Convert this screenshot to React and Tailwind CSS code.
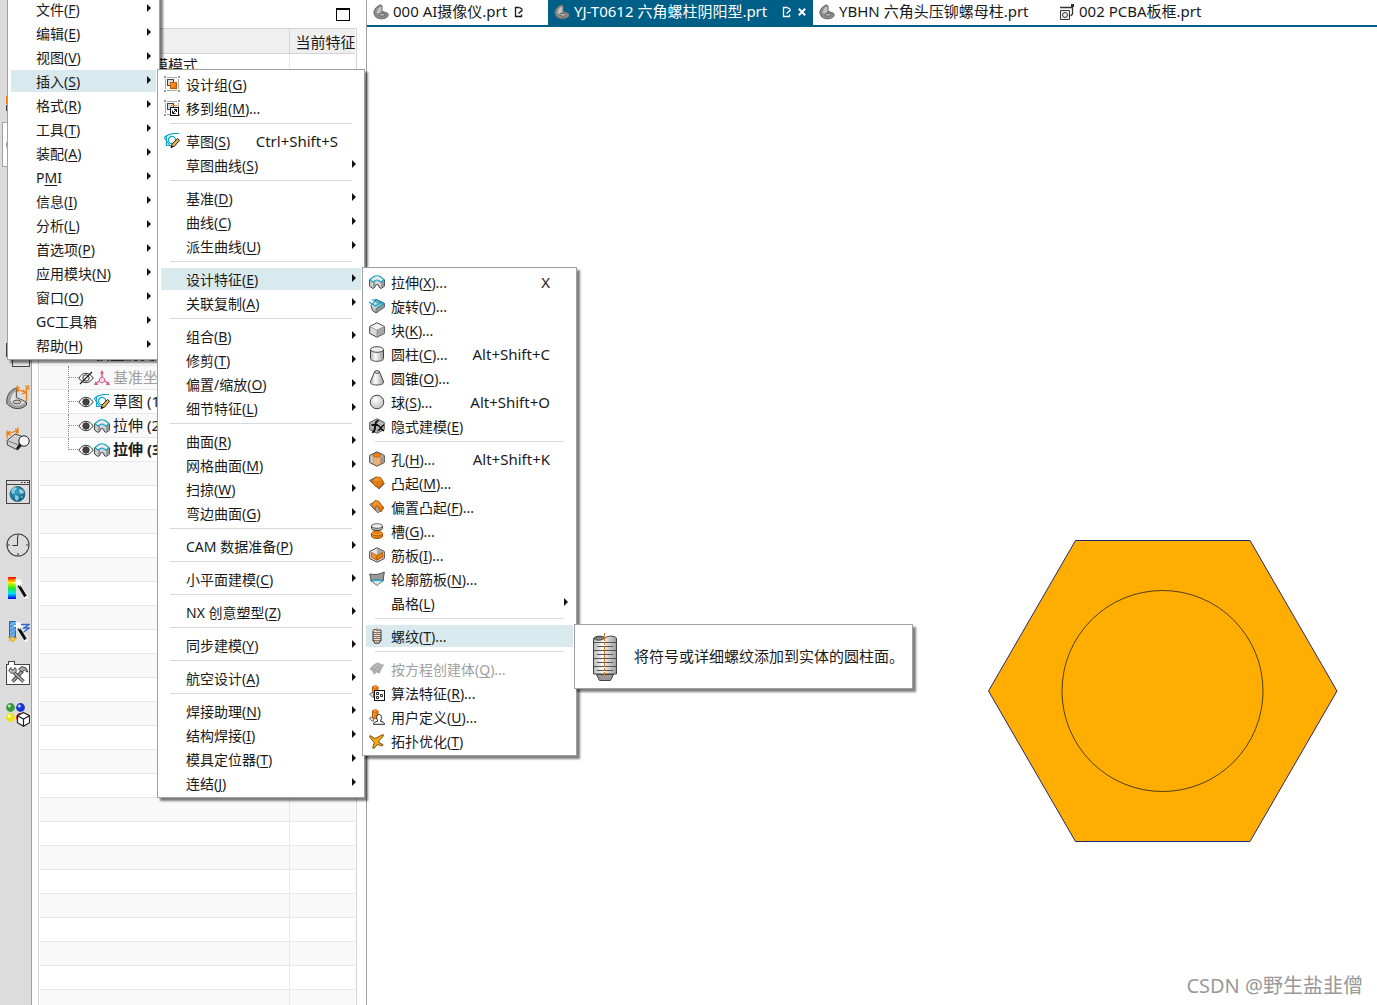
// App.jsx
import { Fragment } from 'react';

const EDGE = '#444';

const Svg = ({ size = 16, children, className = '' }) => (
  <svg
    width={size}
    height={size}
    viewBox={`0 0 ${size} ${size}`}
    fill="none"
    className={`block shrink-0 ${className}`}
    aria-hidden="true"
  >
    {children}
  </svg>
);

/* ---------- shared gradients ---------- */

const Gradients = () => (
  <svg width="0" height="0" className="absolute" aria-hidden="true">
    <defs>
      <linearGradient id="metal" x1="0" y1="0" x2="1" y2="1">
        <stop offset="0" stopColor="#fafafa" />
        <stop offset="1" stopColor="#8e8e8e" />
      </linearGradient>
      <linearGradient id="metalSide" x1="0" y1="0" x2="1" y2="0">
        <stop offset="0" stopColor="#b5b5b5" />
        <stop offset="0.4" stopColor="#fcfcfc" />
        <stop offset="1" stopColor="#9a9a9a" />
      </linearGradient>
      <linearGradient id="amber" x1="0" y1="0" x2="1" y2="1">
        <stop offset="0" stopColor="#ffa73d" />
        <stop offset="1" stopColor="#d96a00" />
      </linearGradient>
      <linearGradient id="rainbow" x1="0" y1="0" x2="0" y2="1">
        <stop offset="0" stopColor="#f00" />
        <stop offset="0.25" stopColor="#fe0" />
        <stop offset="0.5" stopColor="#2e2" />
        <stop offset="0.75" stopColor="#0df" />
        <stop offset="1" stopColor="#00f" />
      </linearGradient>
      <radialGradient id="ball" cx="0.4" cy="0.35" r="0.7">
        <stop offset="0" stopColor="#fff" />
        <stop offset="1" stopColor="#bdbdbd" />
      </radialGradient>
      <radialGradient id="globe" cx="0.4" cy="0.35" r="0.7">
        <stop offset="0" stopColor="#3aa6c4" />
        <stop offset="1" stopColor="#0a5f85" />
      </radialGradient>
    </defs>
  </svg>
);

/* ---------- 16px menu icons ---------- */

const GroupFrame = () => (
  <>
    <path d="M1.500 3v10M14.500 3v10M3 1.500h10M3 14.500h10" stroke="#aaa" />
    <path d="M0 0h2v2H0zM14 0h2v2h-2zM0 14h2v2H0zM14 14h2v2h-2z" fill="#999" />
  </>
);

const DesignGroupIcon = () => (
  <Svg>
    <GroupFrame />
    <rect x="3.500" y="3.500" width="6" height="6" fill="#ddd" stroke="#444" />
    <rect x="6.500" y="6.500" width="6" height="6" fill="url(#amber)" stroke="#c25a00" />
  </Svg>
);

const MoveGroupIcon = () => (
  <Svg>
    <GroupFrame />
    <rect x="3.500" y="3.500" width="6" height="6" fill="#ddd" stroke="#444" />
    <path d="M7 5.500h6" stroke="#f08010" />
    <rect x="6.500" y="7.500" width="8" height="8" fill="#fff" stroke="#111" />
    <path d="M9 13l3.500-3.500M10 9.500h2.500V12M8.500 10.500v3h3" stroke="#111" />
  </Svg>
);

const SketchIcon = () => (
  <Svg>
    <path d="M0 4.500C4 1 9 0 15 .5M2.500 2v10.500h5M.5 5l5 7" stroke="#11a5c7" strokeWidth="1.200" />
    <circle cx="8" cy="7" r="3.600" stroke="#11a5c7" strokeWidth="1.200" />
    <path d="M7 14.500l1-3.300 5.500-5.700 2 1.700-5 6z" fill="#eab543" stroke="#222" />
    <path d="M7 14.800l.8-2.600 1.700 1.500z" fill="#111" />
  </Svg>
);

const ExtrudeIcon = () => (
  <Svg>
    <path d="M.6 6v6.200L4 14.500l2-1.300v-1.700l2-1 2 1v1.700l2 1.300 3.400-2.300V6L11.500 3h-7z" fill="#d2d2d2" stroke={EDGE} />
    <path d="M12 8.500l3-2v5.500l-3 2zM4 8.500l2-1.300v5.500L4 14z" fill="#999" />
    <path d="M.8 5.800L4.200 3C6.500 1.500 9.500 1.500 11.800 3l3.400 2.800L12 8 10 6.800C9 6 7 6 6 6.800L4 8z" fill="#ececec" stroke="#11a5c7" strokeWidth="1.200" />
  </Svg>
);

const RevolveIcon = () => (
  <Svg>
    <path d="M2 7.500l1.500 5L7 15l8.500-6V5.500L7.500 1.500z" fill="url(#metal)" stroke={EDGE} />
    <path d="M7 15v-4l8.500-5.500V9z" fill="#999" stroke="#666" strokeWidth=".6" />
    <path d="M0 4l6.500 4L13 4M3 1.500l8 4.500M5.500 1L14.500 6 7.500 10.500" stroke="#11a5c7" strokeWidth="1.200" />
  </Svg>
);

const BlockIcon = () => (
  <Svg>
    <path d="M8 .8l7.300 3.700v7L8 15.200.7 11.500v-7z" fill="#d9d9d9" stroke={EDGE} />
    <path d="M8 1.400l6.700 3.300L8 8.200 1.300 4.700z" fill="#f2f2f2" />
    <path d="M8 8.200l6.800-3.500v6.500L8 14.600z" fill="#a8a8a8" />
    <path d="M.9 4.700L8 8.200l7.100-3.500M8 8.200v6.600" stroke="#888" strokeWidth=".7" />
  </Svg>
);

const CylinderIcon = () => (
  <Svg>
    <path d="M1.500 3.500v9c0 1.700 3 2.800 6.500 2.800s6.500-1.100 6.500-2.800v-9" fill="url(#metalSide)" stroke={EDGE} />
    <ellipse cx="8" cy="3.500" rx="6.500" ry="2.800" fill="#eee" stroke={EDGE} />
  </Svg>
);

const ConeIcon = () => (
  <Svg>
    <path d="M5.500 2L1.300 12c0 2 3 3 6.700 3s6.700-1 6.700-3L10.500 2" fill="url(#metalSide)" stroke={EDGE} />
    <ellipse cx="8" cy="2" rx="2.500" ry="1.300" fill="#eee" stroke={EDGE} />
  </Svg>
);

const SphereIcon = () => (
  <Svg>
    <circle cx="8" cy="8" r="6.800" fill="url(#ball)" stroke={EDGE} />
  </Svg>
);

const ImplicitIcon = () => (
  <Svg>
    <path d="M8 .8l7.300 3.700v7L8 15.200.7 11.500v-7z" fill="#b5b5b5" stroke="#555" />
    <path d="M3 14c2 .5 2.500-1 3-4.500S6.500 2.500 9.500 3M2.500 7H9" stroke="#111" strokeWidth="2" />
    <path d="M9 7.500c2-.5 3 6 6 5M15 7c-2 0-4 6-6.500 5.500" stroke="#111" strokeWidth="1.600" />
  </Svg>
);

const HoleIcon = () => (
  <Svg>
    <path d="M8 .8l7.300 3.700v7L8 15.200.7 11.500v-7z" fill="#ccc" stroke={EDGE} />
    <path d="M8 8l6.900-3.200v6.400L8 14.700z" fill="#9a9a9a" />
    <path d="M4.300 4v8.700L8 14.500l3.700-1.800V4z" fill="#e8b47c" stroke="#c77a33" strokeWidth=".6" />
    <ellipse cx="8" cy="4.300" rx="3.900" ry="1.900" fill="#f28414" stroke="#b85a00" strokeWidth=".8" />
  </Svg>
);

const EmbossIcon = () => (
  <Svg>
    <path d="M.5 5.500L10 14l5.500-5.500L7 2z" fill="#888" stroke="#666" />
    <path d="M3 6l4-4 4.500.5 3 4.500-3.500 5.500-5-1.500z" fill="url(#amber)" stroke="#b85a00" />
    <path d="M3.500 6.500l5.500.5 5-.2M9 7l-2 4" stroke="#c86400" strokeWidth=".7" />
  </Svg>
);

const OffsetEmbossIcon = () => (
  <Svg>
    <path d="M.5 5.500L9 14l6-5.500L7 2z" fill="#a5a5a5" stroke="#777" />
    <path d="M3 5.500l3-4 4 1 4.500 6.500-2.500 4-3-5.500-2-.5-1 4z" fill="url(#amber)" stroke="#b85a00" />
  </Svg>
);

const GrooveIcon = () => (
  <Svg>
    <path d="M2.500 10v3c0 1.300 2.500 2.400 5.500 2.400s5.500-1.100 5.500-2.400v-3" fill="url(#amber)" stroke="#9c4d00" />
    <ellipse cx="8" cy="10.500" rx="5.500" ry="2.300" fill="#ff9b2f" stroke="#9c4d00" strokeWidth=".8" />
    <path d="M4.500 6.500h7V10c-1.500 1-5.500 1-7 0z" fill="#e07a10" />
    <path d="M2.500 3v2.500c0 1.200 2.500 2 5.500 2s5.500-.8 5.500-2V3" fill="#bbb" stroke={EDGE} />
    <ellipse cx="8" cy="3" rx="5.500" ry="2.300" fill="#eee" stroke={EDGE} strokeWidth=".8" />
  </Svg>
);

const RibIcon = () => (
  <Svg>
    <path d="M8 .8l7.300 3.700v7L8 15.200.7 11.500v-7z" fill="#e6e6e6" stroke={EDGE} />
    <path d="M8 1.300v6L14.700 11V4.700z" fill="#aaa" />
    <path d="M2.500 5.500L8 8.500l5.500-3v4.800L8 13.300l-5.500-3z" fill="url(#amber)" stroke="#a85200" strokeWidth=".8" />
    <path d="M8 8.500v4.800" stroke="#a85200" />
  </Svg>
);

const ContourRibIcon = () => (
  <Svg>
    <path d="M1 9l7 5.500L15 9z" fill="#e4e4e4" stroke="#777" />
    <path d="M.7 3c5 1 10 .5 14.600-2L14 10c-4-1.500-8-1.500-11.500 0z" fill="#999" stroke="#555" />
    <path d="M2.500 10.500c3.500-1.500 8-1.500 11.500 0" stroke="#22b5d8" strokeWidth="1.500" />
  </Svg>
);

const ThreadIcon = () => (
  <Svg>
    <path d="M4 2.500c1-1.500 2.500-1 4-.3s3-1.200 4 0V13h-1l-.7 2.200H5.700L5 13H4z" fill="#e4e4e4" stroke="#333" />
    <path d="M4 4.500h8M4 6.500h8M4 8.500h8M4 10.500h8M4 12.500h8" stroke="#555" strokeWidth=".8" />
    <path d="M8 0v16" stroke="#f07a10" strokeWidth="1.200" strokeDasharray="3 1" />
  </Svg>
);

const LawSurfaceIcon = () => (
  <Svg>
    <path d="M.5 8C3 5 6 2 9 1.500c2 1 4 2 6.500 2.200C13 6 12 9 10.500 13 8 11 7.500 11 5 14 4 11 2.500 9 .5 8z" fill="#a9a9a9" />
    <path d="M3 5.500c3 1 5 2 8 4M6 3c2.500 1 5 2 7 3.500M3 10c2-3 5-6 8-7.800M6.500 11C8 8 10 5 13.500 3" stroke="#c4c4c4" strokeWidth=".7" />
  </Svg>
);

const AlgorithmIcon = () => (
  <Svg>
    <path d="M.5 9l4-2v6z" fill="#ddd" stroke="#777" />
    <path d="M3.500 2v5c1 1 4.500 1 5.500 0V2z" fill="url(#amber)" stroke="#b85a00" />
    <ellipse cx="6.200" cy="2" rx="2.800" ry="1.300" fill="#ff9b2f" stroke="#b85a00" strokeWidth=".7" />
    <rect x="5.500" y="5.500" width="10" height="10" fill="#fff" stroke="#111" />
    <path d="M7.500 7.500h2v2h-2zM7.500 11.500h2v2h-2zM11.500 9.500h2v2h-2z" stroke="#111" strokeWidth=".9" />
  </Svg>
);

const UserDefinedIcon = () => (
  <Svg>
    <path d="M.5 9l4-2v5.500L1.500 11z" fill="#ddd" stroke="#777" />
    <path d="M3.500 2v7c1 1 4.500 1 5.500 0V2z" fill="url(#amber)" stroke="#b85a00" />
    <ellipse cx="6.200" cy="2" rx="2.800" ry="1.300" fill="#ff9b2f" stroke="#b85a00" strokeWidth=".7" />
    <path d="M4.500 15.300c0-2 2-2.500 4-3V11C7 9 7.500 5.500 10 5.500s3.200 3.500 1.700 5.500v1.300c2 .5 3.800 1 3.800 3z" fill="#fff" stroke="#222" />
  </Svg>
);

const TopologyIcon = () => (
  <Svg>
    <path d="M1 2.500l5 3L14 1.500l.5 1.700-4.500 4.300.3 2.500 3.700 1.500-.8 1.500-5-1.500-3 4-1.500-.5 1.500-5.500L.7 4z" fill="#f2a81d" stroke="#6b4a08" strokeWidth=".9" />
  </Svg>
);

/* ---------- part tab icons ---------- */

const PartIcon = () => (
  <Svg>
    <path d="M.8 9C1 5.500 3.500 2 8 .8l1 1v5.400l5.500 2c1.200 1.300.8 3.300-1 4.300-3.500 2-8 1.700-11-.8z" fill="#8b8b8b" stroke="#666" />
    <path d="M3.500 8.500C4 5.500 6 3 8.300 2.200v5.600L5 10z" fill="#c4c4c4" />
    <ellipse cx="9" cy="10.700" rx="3" ry="1.500" fill="#b9b9b9" stroke="#555" strokeWidth=".8" />
  </Svg>
);

const BoardIcon = () => (
  <Svg>
    <path d="M1.500 6.500h9v9h-9z" fill="#eee" stroke="#333" />
    <path d="M1 3.500h12M13.500 2v8l-2 2" stroke="#333" strokeWidth="1.300" />
    <circle cx="6" cy="11" r="2.500" stroke="#333" />
    <rect x="12" y="0" width="3" height="3" fill="#333" />
  </Svg>
);

const ModifiedIcon = () => (
  <svg width="10" height="12" viewBox="0 0 10 12" fill="none" className="block shrink-0" aria-hidden="true">
    <path d="M5.500 1.500h-4v9h6V8.500" stroke="currentColor" strokeWidth="1.300" />
    <path d="M4.500 7.500L8.500 4M5.500 1.500L8.500 3.500" stroke="currentColor" strokeWidth="1.500" />
  </svg>
);

/* ---------- tree icons ---------- */

const EyeIcon = ({ off }) => (
  <Svg>
    <path d="M.8 8C3 4.800 5.500 3.300 8 3.300S13 4.800 15.200 8C13 11.200 10.500 12.700 8 12.700S3 11.200.8 8z" fill="#fff" stroke="#333" />
    <circle cx="8" cy="8" r="3.200" fill={off ? '#fff' : '#444'} stroke="#333" />
    {off && <path d="M2 14L14 2" stroke="#222" strokeWidth="1.300" />}
  </Svg>
);

const CsysIcon = () => (
  <Svg>
    <path d="M8 2v7L2 13.500M8 9l6 4.500" stroke="#d65c8b" strokeWidth="1.500" />
    <path d="M8 0l2 3.500H6zM0 15l1.500-3.700L4.300 15zM16 15l-1.500-3.700L11.700 15z" fill="#d65c8b" />
    <path d="M8 7l2.500 1.500v3L8 13l-2.500-1.500v-3z" fill="#f6dbe6" stroke="#d65c8b" />
  </Svg>
);

/* ---------- 24px resource bar icons ---------- */

const NavigatorIcon = () => (
  <Svg size={24}>
    <rect y="7" width="16" height="8" fill="#f08010" />
    <rect y="16" width="16" height="6" fill={EDGE} />
    <path d="M4 18.500h12M4 20.500h12" stroke="#ccc" />
  </Svg>
);

const ConstraintIcon = () => (
  <Svg size={24}>
    <rect x=".5" y=".5" width="16" height="13" fill="#eee" stroke={EDGE} />
    <rect x="6.500" y="6.500" width="17" height="17" fill="#e4e4e4" stroke={EDGE} />
  </Svg>
);

const BracketDimIcon = () => (
  <Svg size={24}>
    <path d="M.8 16C1 10 4 5 10.500 3v9.500l10 4.500v3c-3 3-7 4-11 3.500-3.500-.5-7-3-8.700-5z" fill="#a5a5a5" stroke={EDGE} />
    <path d="M4 15.500C4.500 10.500 7 7 10 5.500v7.200l9.500 4.300c-2 3-6 4.500-10 4C7 20.500 5 18 4 15.500z" fill="#e2e2e2" stroke="#888" strokeWidth=".7" />
    <ellipse cx="11" cy="17" rx="4" ry="1.900" fill="#c9c9c9" stroke="#555" />
    <path d="M11 .5v5M11 4l8.500 3.500M20.500 4v12M13.500 2L11 4l1.500 3M17 5l2.500 2.500L16 9M19.500.5l4 4M23.500.5l-4 4" stroke="#ee7d0e" strokeWidth="1.300" />
  </Svg>
);

const InspectIcon = () => (
  <Svg size={24}>
    <path d="M1 13.500L9 7l10 3.500v5L11.500 23 1.500 18z" fill="#d0d0d0" stroke={EDGE} />
    <path d="M11.500 17.500l7.500-7v5L11.500 23z" fill="#999" />
    <path d="M1 13.500l10.500 4 7.500-7" stroke="#777" />
    <path d="M1 3.500v8M12 .5v6M1.500 7L11.500 3.500M4 4L1.500 7 5 8.500M9 2l2.500 1.500L10 6.500" stroke="#ee7d0e" strokeWidth="1.300" />
    <circle cx="18" cy="14" r="5.200" fill="#f8f8f8" stroke="#222" />
    <path d="M14.500 17.500L11 22" stroke="#111" strokeWidth="2.500" />
  </Svg>
);

const BrowserIcon = () => (
  <Svg size={24}>
    <rect x=".5" y=".5" width="23" height="23" fill="#dcdcdc" stroke={EDGE} />
    <path d="M0 4.500h24" stroke={EDGE} />
    <path d="M15 2.500h1.500M18 2.500h1.500M21 2.500h1.500" stroke="#222" />
    <circle cx="11.500" cy="14" r="7.500" fill="url(#globe)" stroke="#1b5c77" strokeWidth=".8" />
    <path d="M6 9c2-2 4-2 5-1l-1 2-2 1 1 2-2 1-2-2zM13 9l4 1 1 3-3 1-2-2zM9 15l3 1 1 2-2 3-2-2zM15 16l2 .5-1.500 2z" fill="#8fcbdc" />
  </Svg>
);

const HistoryIcon = () => (
  <Svg size={24}>
    <circle cx="12" cy="12" r="11" stroke={EDGE} strokeWidth="1.100" />
    <path d="M12 1v3M12 20v3M1 12h3M20 12h3" stroke={EDGE} strokeWidth="1.100" />
    <path d="M11.500 4v8.500H6.500" stroke="#333" />
  </Svg>
);

const Wand = () => (
  <>
    <path d="M13 9l7.500 12.500" stroke="#fff" strokeWidth="5" strokeOpacity=".5" />
    <path d="M12.500 9l7 11.500" stroke="#111" strokeWidth="3" />
    <circle cx="20.500" cy="21.500" r="1.200" fill="#fff" />
    <path d="M12 1l1 3.500 3.500-1.500-2 3 3 1.500-3.500.5.500 3-2.500-2-2.500 2.500.5-3.500L7 6.500l3-.8-1-3 2.500 1.500z" fill="#fff" />
  </>
);

const ColorWizardIcon = () => (
  <Svg size={24}>
    <rect x="2" y="1" width="8" height="22" fill="url(#rainbow)" />
    <Wand />
  </Svg>
);

const ToolWizardIcon = () => (
  <Svg size={24}>
    <path d="M12 5.500h11l-5 3.500h5l-6 4.500" stroke="#3568c4" strokeWidth="1.400" />
    <path d="M3.500 2.500h6v16h-6z" fill="#4f9be0" stroke="#2a62b5" />
    <path d="M4 6l5-2.500M4 10l5-3M4 14l5-3M4 17.500l5-3" stroke="#8fc2ef" />
    <path d="M2 18l2 1.500L6.500 18 9 20l2-1.500M3 22l2-2 2 2.500L9 20" stroke="#f0b21a" strokeWidth="1.400" />
    <Wand />
  </Svg>
);

const ToolsIcon = () => (
  <Svg size={24}>
    <path d="M.5 23.500v-20h2v-3h6v3h15v20z" fill="#fff" stroke={EDGE} strokeWidth="1.100" />
    <path d="M6.500 20.500L16.500 10" stroke="#444" strokeWidth="3.500" />
    <path d="M6.500 20.500L16.500 10" stroke="#aaa" strokeWidth="1.500" />
    <path d="M12.500 8l3.500-2.500 4 1.500 2 4-2-.5-1.500-1.500-2.500 2z" fill="#aaa" stroke="#444" />
    <path d="M8 11.500l9.500 9" stroke="#444" strokeWidth="3.500" />
    <path d="M8 11.500l9.500 9" stroke="#bbb" strokeWidth="1.500" />
    <path d="M3 9c0 2.500 3 4 5.500 3s2-4 .5-5.500L7.500 9 5 8.500v-2z" fill="#bbb" stroke="#444" />
  </Svg>
);

const RolesIcon = () => (
  <Svg size={24}>
    <circle cx="4.500" cy="4.500" r="4.400" fill="#3a993a" />
    <circle cx="14.500" cy="4.500" r="4.400" fill="#1935d8" />
    <circle cx="4.500" cy="14.500" r="4.400" fill="#efe214" />
    <circle cx="14.500" cy="14.500" r="4.400" fill="#d81414" />
    <circle cx="3.300" cy="3" r="1.500" fill="#bfe6bf" />
    <circle cx="13.300" cy="3" r="1.500" fill="#c4ceff" />
    <circle cx="3.300" cy="13" r="1.500" fill="#fffdc8" />
    <path d="M17.500 9.500l6 3.200v7L17.500 23.300l-6-3.600v-7z" fill="#fff" stroke="#222" strokeWidth="1.200" />
    <path d="M11.500 12.700l6 3.300 6-3.300M17.500 16v7" stroke="#222" strokeWidth="1.200" />
  </Svg>
);

const LargeThreadIcon = () => (
  <svg width="24" height="48" viewBox="0 0 24 48" fill="none" className="block shrink-0" aria-hidden="true">
    <path d="M3.500 41.500h17l-3 6h-11z" fill="#999" stroke="#444" />
    <path d="M.5 5.500c2-3 9-3 11.500-.5 3-2.500 9-2.500 11.500 0v36H.5z" fill="url(#metalSide)" stroke="#444" />
    <path d="M1 5.500c3-2.500 8-2.500 11-.5-3 2.500-8 3-11 .5z" fill="#8a8a8a" stroke="#444" />
    <path d="M1 9.500h22M4 13.500h16M1 17.500h22M4 21.500h16M1 25.500h22M4 29.500h16M1 33.500h22M4 37.500h16" stroke="#555" />
    <path d="M11.500 0v43" stroke="#d9771e" strokeDasharray="8 1 3 1" />
  </svg>
);

/* ---------- data ---------- */

// "&" marks the accelerator letter, "-" is a separator
const MAIN_MENU = [
  { label: '文件(&F)', sub: true },
  { label: '编辑(&E)', sub: true },
  { label: '视图(&V)', sub: true },
  { label: '插入(&S)', sub: true, active: true },
  { label: '格式(&R)', sub: true },
  { label: '工具(&T)', sub: true },
  { label: '装配(&A)', sub: true },
  { label: 'P&MI', sub: true },
  { label: '信息(&I)', sub: true },
  { label: '分析(&L)', sub: true },
  { label: '首选项(&P)', sub: true },
  { label: '应用模块(&N)', sub: true },
  { label: '窗口(&O)', sub: true },
  { label: 'GC工具箱', sub: true },
  { label: '帮助(&H)', sub: true },
];

const INSERT_MENU = [
  { label: '设计组(&G)', icon: DesignGroupIcon },
  { label: '移到组(&M)...', icon: MoveGroupIcon },
  '-',
  { label: '草图(&S)', icon: SketchIcon, keys: 'Ctrl+Shift+S' },
  { label: '草图曲线(&S)', sub: true },
  '-',
  { label: '基准(&D)', sub: true },
  { label: '曲线(&C)', sub: true },
  { label: '派生曲线(&U)', sub: true },
  '-',
  { label: '设计特征(&E)', sub: true, active: true },
  { label: '关联复制(&A)', sub: true },
  '-',
  { label: '组合(&B)', sub: true },
  { label: '修剪(&T)', sub: true },
  { label: '偏置/缩放(&O)', sub: true },
  { label: '细节特征(&L)', sub: true },
  '-',
  { label: '曲面(&R)', sub: true },
  { label: '网格曲面(&M)', sub: true },
  { label: '扫掠(&W)', sub: true },
  { label: '弯边曲面(&G)', sub: true },
  '-',
  { label: 'CAM 数据准备(&P)', sub: true },
  '-',
  { label: '小平面建模(&C)', sub: true },
  '-',
  { label: 'NX 创意塑型(&Z)', sub: true },
  '-',
  { label: '同步建模(&Y)', sub: true },
  '-',
  { label: '航空设计(&A)', sub: true },
  '-',
  { label: '焊接助理(&N)', sub: true },
  { label: '结构焊接(&I)', sub: true },
  { label: '模具定位器(&T)', sub: true },
  { label: '连结(&J)', sub: true },
];

const FEATURE_MENU = [
  { label: '拉伸(&X)...', icon: ExtrudeIcon, keys: 'X' },
  { label: '旋转(&V)...', icon: RevolveIcon },
  { label: '块(&K)...', icon: BlockIcon },
  { label: '圆柱(&C)...', icon: CylinderIcon, keys: 'Alt+Shift+C' },
  { label: '圆锥(&O)...', icon: ConeIcon },
  { label: '球(&S)...', icon: SphereIcon, keys: 'Alt+Shift+O' },
  { label: '隐式建模(&E)', icon: ImplicitIcon },
  '-',
  { label: '孔(&H)...', icon: HoleIcon, keys: 'Alt+Shift+K' },
  { label: '凸起(&M)...', icon: EmbossIcon },
  { label: '偏置凸起(&F)...', icon: OffsetEmbossIcon },
  { label: '槽(&G)...', icon: GrooveIcon },
  { label: '筋板(&I)...', icon: RibIcon },
  { label: '轮廓筋板(&N)...', icon: ContourRibIcon },
  { label: '晶格(&L)', sub: true },
  '-',
  { label: '螺纹(&T)...', icon: ThreadIcon, active: true },
  '-',
  { label: '按方程创建体(&Q)...', icon: LawSurfaceIcon, disabled: true },
  { label: '算法特征(&R)...', icon: AlgorithmIcon },
  { label: '用户定义(&U)...', icon: UserDefinedIcon },
  { label: '拓扑优化(&T)', icon: TopologyIcon },
];

const TABS = [
  { name: '000 AI摄像仪.prt', icon: PartIcon, modified: true, width: 'min-w-[181px]' },
  { name: 'YJ-T0612 六角螺柱阴阳型.prt', icon: PartIcon, modified: true, active: true, width: 'min-w-[265px]' },
  { name: 'YBHN 六角头压铆螺母柱.prt', icon: PartIcon, width: 'min-w-[240px]' },
  { name: '002 PCBA板框.prt', icon: BoardIcon, width: 'min-w-[180px]' },
];

const RESOURCE_ITEMS = [
  { name: '约束导航器', icon: ConstraintIcon, gap: 'mt-[176px]' },
  { name: '装配导航器', icon: BracketDimIcon, gap: 'mt-[18px]' },
  { name: '检查', icon: InspectIcon, gap: 'mt-[18px]' },
  { name: '浏览器', icon: BrowserIcon, gap: 'mt-[29px]' },
  { name: '历史记录', icon: HistoryIcon, gap: 'mt-[29px]' },
  { name: '颜色向导', icon: ColorWizardIcon, gap: 'mt-[19px]' },
  { name: '工具向导', icon: ToolWizardIcon, gap: 'mt-[19px]' },
  { name: '工具', icon: ToolsIcon, gap: 'mt-[18px]' },
  { name: '角色', icon: RolesIcon, gap: 'mt-[18px]' },
];

// keyed by row index in the part navigator
const TREE_ROWS = {
  0: { title: '建模模式' },
  12: { root: true, title: '模型历史记录' },
  13: { icon: CsysIcon, title: '基准坐标系', hidden: true },
  14: { icon: SketchIcon, title: '草图 (1)' },
  15: { icon: ExtrudeIcon, title: '拉伸 (2)' },
  16: { icon: ExtrudeIcon, title: '拉伸 (3)', bold: true, last: true },
};

/* ---------- components ---------- */

const MenuLabel = ({ text }) => {
  const [before, rest] = text.split('&');
  return (
    <span className="pt-[2px] whitespace-nowrap">
      {before}
      {rest && <span className="underline underline-offset-2">{rest[0]}</span>}
      {rest && rest.slice(1)}
    </span>
  );
};

const Menu = ({ items, label, className }) => (
  <ul
    role="menu"
    aria-label={label}
    className={`absolute flex flex-col gap-[2px] border border-[#a0a0a0] bg-white p-[3px] text-sm shadow-[3px_3px_2px_rgba(0,0,0,0.5)] ${className}`}
  >
    {items.map((item, i) =>
      item === '-' ? (
        <li key={i} role="separator" className="mx-[9px] mt-[2px] mb-1 border-t border-[#d9d9d9]" />
      ) : (
        <li key={i} role="none">
          <button
            type="button"
            role="menuitem"
            disabled={item.disabled}
            className={`flex h-[22px] w-full items-center pl-[3px] text-left ${
              item.active ? 'bg-[#d9eaee]' : ''
            } ${item.disabled ? 'text-[#a0a0a0]' : ''}`}
          >
            <span className="mr-[6px] w-4 shrink-0">{item.icon && <item.icon />}</span>
            <MenuLabel text={item.label} />
            {item.keys && <span className="ml-auto pt-px pr-[23px] text-[15px]">{item.keys}</span>}
            {item.sub && (
              <svg width="4" height="8" viewBox="0 0 4 8" className="mr-[5px] mb-[2px] ml-auto" aria-hidden="true">
                <path d="M0 0l4 4-4 4z" fill="#111" />
              </svg>
            )}
          </button>
        </li>
      )
    )}
  </ul>
);

const ResourceBar = () => (
  <nav aria-label="资源条" className="flex w-8 shrink-0 flex-col border-r border-[#a0a0a0] bg-[#dcdcdc] pt-[89px]">
    <button type="button" aria-label="部件" className="ml-[6px] w-6">
      <NavigatorIcon />
    </button>
    <button type="button" aria-label="部件导航器" className="mt-[9px] ml-[2px] h-[45px] border border-r-0 border-[#a0a0a0] bg-white pl-[3px]">
      <HistoryIcon />
    </button>
    {RESOURCE_ITEMS.map(item => (
      <button key={item.name} type="button" aria-label={item.name} className={`ml-[6px] w-6 ${item.gap}`}>
        <item.icon />
      </button>
    ))}
  </nav>
);

const TreeCell = ({ row }) => {
  if (!row) return null;
  if (!row.icon) {
    return (
      <div className={`flex h-[23px] items-center whitespace-nowrap ${row.root ? 'pl-[55px] font-bold' : 'pl-[98px]'}`}>
        {row.title}
      </div>
    );
  }
  return (
    <div className="flex h-[23px] items-center pl-7 whitespace-nowrap">
      <span className={`w-px self-stretch border-l border-dotted border-[#888] ${row.last ? 'mb-[11px]' : '-mb-px'}`} />
      <span className="w-[9px] border-t border-dotted border-[#888]" />
      <EyeIcon off={row.hidden} />
      <row.icon />
      <span className={`pl-[3px] ${row.bold ? 'font-bold' : ''} ${row.hidden ? 'text-[#a0a0a0]' : ''}`}>{row.title}</span>
    </div>
  );
};

const PartNavigator = () => (
  <section aria-label="部件导航器" className="flex w-[335px] shrink-0 flex-col border-r border-[#a0a0a0] pr-[9px] pl-[6px]">
    <div className="flex h-7 shrink-0 items-center justify-end pr-[7px]">
      <button type="button" aria-label="最大化" className="h-[13px] w-[14px] border border-t-2 border-black" />
    </div>
    <div className="grow border border-[#d4d4d4] px-px">
      <table className="w-full table-fixed border-collapse text-[15px]">
        <colgroup>
          <col />
          <col className="w-[66px]" />
        </colgroup>
        <thead>
          <tr className="h-6 border-b border-[#d4d4d4] bg-[#efefef]">
            <th aria-label="名称" />
            <th className="overflow-hidden border-l border-[#d4d4d4] p-0 pt-[2px] pl-[6px] text-left leading-[22px] font-normal whitespace-nowrap">
              当前特征
            </th>
          </tr>
        </thead>
        <tbody>
          {Array.from({ length: 40 }, (_, i) => (
            <tr key={i} className="h-6 border-b border-[#e8e8e8] even:bg-[#f9f9f9]">
              <td className="overflow-hidden p-0">
                <TreeCell row={TREE_ROWS[i]} />
              </td>
              <td className="border-l border-[#e8e8e8] p-0" />
            </tr>
          ))}
        </tbody>
      </table>
    </div>
  </section>
);

const TabBar = () => (
  <div className="flex h-[27px] shrink-0 border-b-2 border-[#005f87] text-[15px]">
    {TABS.map(tab => (
      <div
        key={tab.name}
        className={`flex items-center gap-[7px] pb-[2px] pl-[6px] ${tab.width} ${
          tab.active ? 'justify-between bg-[#005f87] pr-[7px] text-white' : ''
        }`}
      >
        <button type="button" className="flex items-center gap-1 whitespace-nowrap">
          <tab.icon />
          <span>{tab.name}</span>
        </button>
        <span className="flex items-center gap-[6px]">
          {tab.modified && <ModifiedIcon />}
          {tab.active && (
            <button type="button" aria-label="关闭">
              <svg width="8" height="8" viewBox="0 0 8 8" className="block" aria-hidden="true">
                <path d="M.8.8l6.400 6.400M7.200.8L.8 7.200" stroke="#fff" strokeWidth="2" />
              </svg>
            </button>
          )}
        </span>
      </div>
    ))}
  </div>
);

const Viewport = () => (
  <div className="relative grow">
    <svg
      width="350"
      height="304"
      viewBox="0 0 350 304"
      className="absolute top-[512px] left-[621px]"
      role="img"
      aria-label="六角螺柱"
    >
      <path d="M.5 152L87.500 1.500h174.500L349 152l-87 150.500H87.500z" fill="#ffae00" stroke="#26266e" strokeWidth="1" />
      <circle cx="174.500" cy="152" r="100.500" fill="none" stroke="#222" strokeWidth=".8" />
    </svg>
    <p className="absolute right-[14px] bottom-[5px] text-xl text-[#999]">CSDN @野生盐韭僧</p>
  </div>
);

const Tooltip = () => (
  <div
    role="tooltip"
    className="absolute top-[624px] left-[574px] flex h-[65px] items-center border border-[#a0a0a0] bg-white pr-2 pl-[18px] text-[15px] whitespace-nowrap shadow-[3px_3px_2px_rgba(0,0,0,0.5)]"
  >
    <LargeThreadIcon />
    <span className="pl-[17px]">将符号或详细螺纹添加到实体的圆柱面。</span>
  </div>
);

export default function App() {
  return (
    <Fragment>
      <Gradients />
      <div className="relative flex h-screen overflow-hidden bg-white font-['Noto_Sans','Noto_Sans_CJK_SC',sans-serif] text-[#1a1a1a]">
        <ResourceBar />
        <PartNavigator />
        <main className="flex min-w-0 grow flex-col">
          <TabBar />
          <Viewport />
        </main>
        <Menu items={MAIN_MENU} label="菜单" className="-top-[6px] left-[7px] w-[153px]" />
        <Menu items={INSERT_MENU} label="插入" className="top-[69px] left-[157px] w-[208px]" />
        <Menu items={FEATURE_MENU} label="设计特征" className="top-[267px] left-[362px] w-[215px]" />
        <Tooltip />
      </div>
    </Fragment>
  );
}
